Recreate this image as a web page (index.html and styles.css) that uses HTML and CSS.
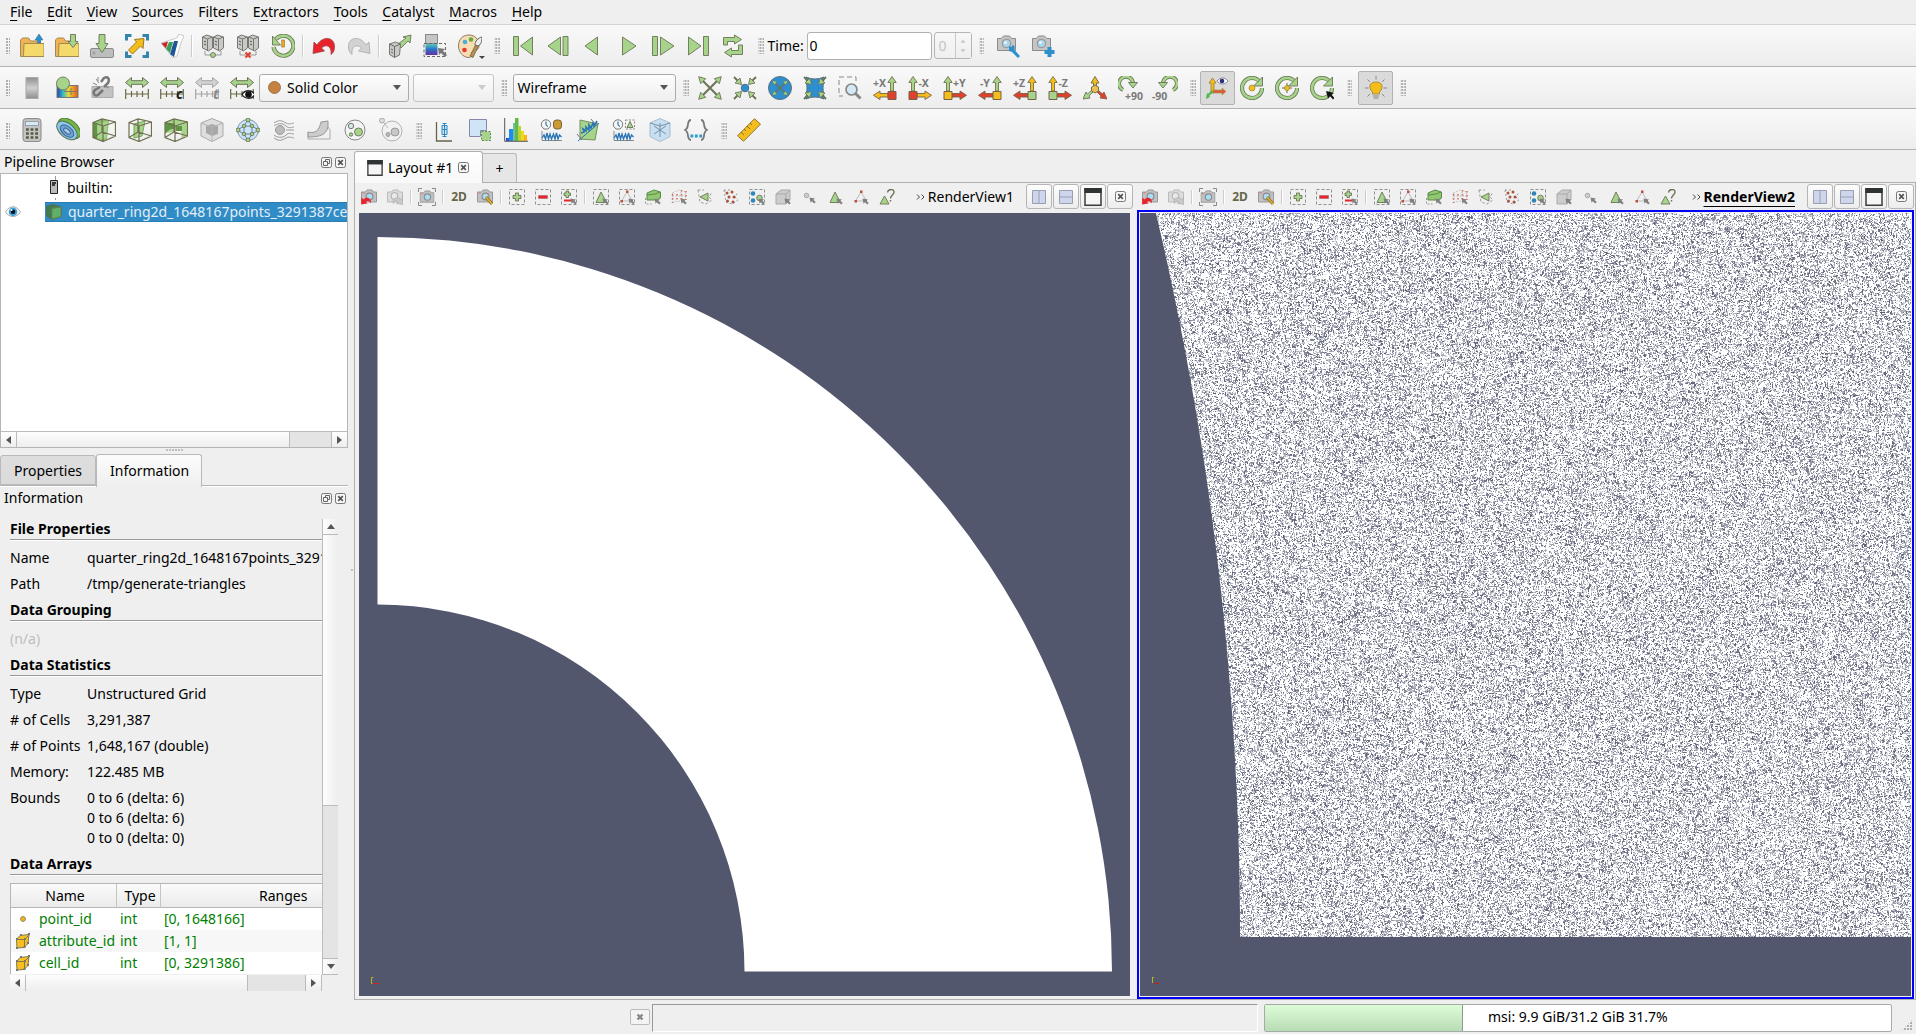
FILE: index.html
```html
<!DOCTYPE html>
<html lang="en">
<head>
<meta charset="utf-8">
<title>ParaView</title>
<link rel="stylesheet" href="styles.css">
</head>
<body>
<svg class="sprite" aria-hidden="true">
  <defs>
    <linearGradient id="gray" x1="0" x2="0" y1="0" y2="1"><stop offset="0" stop-color="#8f8f8f"/><stop offset=".5" stop-color="#cfcfcf"/><stop offset="1" stop-color="#8f8f8f"/></linearGradient>
    <linearGradient id="rainbow"><stop offset="0" stop-color="#1f3fae"/><stop offset=".3" stop-color="#38c0c8"/><stop offset=".55" stop-color="#e8d838"/><stop offset="1" stop-color="#e05a1c"/></linearGradient>
    <linearGradient id="cool" x1="0" x2="0" y1="0" y2="1"><stop offset="0" stop-color="#58c8b8"/><stop offset=".5" stop-color="#2a6fc8"/><stop offset="1" stop-color="#6a2fa0"/></linearGradient>
  </defs>
  <symbol id="folder" viewBox="0 0 24 24"><path d="M.5 22V6l2-2h6l2 3h10v4" fill="#f2b356" stroke="#a08a50"/><path d="M4 9.500h20v13H.5l3-1z" fill="#f4da6a" stroke="#a08a50"/></symbol>
  <symbol id="open" viewBox="0 0 24 24"><use href="#folder"/><path d="M19 0l4 6h-2.500v3h-3V6H15z" fill="#2d8fcb" stroke="#3a6f90" stroke-width=".5"/></symbol>
  <symbol id="load" viewBox="0 0 24 24"><use href="#folder"/><path d="M15.500.5h5v7H23l-5 6-5-6h2.500z" class="g"/></symbol>
  <symbol id="save" viewBox="0 0 24 24"><rect x=".5" y="14.500" width="23" height="9" rx="1.500" fill="#bcbebc" stroke="#8a8a8a"/><circle cx="4" cy="19" r="1" fill="#eee" stroke="#666" stroke-width=".6"/><path d="M9 .5h6v9h3l-6 9-6-9h3z" class="g"/></symbol>
  <symbol id="extract" viewBox="0 0 24 24"><path d="M1.500 6.500v-5h5M17.500 1.500h5v5M22.500 17.500v5h-5M6.500 22.500h-5v-5" fill="none" stroke="#3484b0" stroke-width="3"/><path d="M9.500 5.500L19 4.500l-1 10-2.500-2.500-8 8-4-4 8-8z" fill="#f4bd1c" stroke="#9a7b20"/></symbol>
  <symbol id="catalyst" viewBox="0 0 24 24"><path d="M1 9L17 4l2-4 5 2-2 4-5 16-4 2z" fill="#fff" stroke="#aaa" stroke-width=".6"/><path d="M1.500 9.500l4.500 5 2-7z" fill="#c8232c"/><path d="M9 8h4l-3 11-4-4z" fill="#3b9e56"/><path d="M14 7h4l-4 16-4-3z" fill="#1e5697"/></symbol>
  <symbol id="servers" viewBox="0 0 24 24"><path d="M1.500 3l4-2 6 2v11l-4 3-6-3z M12.500 3l4-2 6 2v11l-4 3-6-3z" fill="#c9c9c7" stroke="#77776f"/><path d="M1.500 3l5 2v12M6.500 5l5-2M12.500 3l5 2v12M17.500 5l5-2" fill="none" stroke="#77776f"/><path d="M3 7l2 1M14 7l2 1M3 10l2 1M14 10l2 1" stroke="#555"/><path d="M4 17v4h16v-4" fill="none" stroke="#999"/></symbol>
  <symbol id="connect" viewBox="0 0 24 24"><use href="#servers"/><circle cx="12" cy="21" r="2.500" class="g"/></symbol>
  <symbol id="disconnect" viewBox="0 0 24 24"><use href="#servers"/><path d="M9.500 18.500l5 5m0-5l-5 5" stroke="#e04434" stroke-width="2.200"/></symbol>
  <symbol id="history" viewBox="0 0 24 24"><path d="M5 5a10 10 0 1 1-2.500 8" fill="none" stroke="#6b7a58" stroke-width="4.200"/><path d="M5 5a10 10 0 1 1-2.500 8" fill="none" stroke="#a7d48b" stroke-width="2.500"/><path d="M1.500 2v9h8z" class="g"/><rect x="10.800" y="6" width="2.500" height="7" fill="#f4a91c" stroke="#876720" stroke-width=".6"/></symbol>
  <symbol id="undo" viewBox="0 0 24 24"><path d="M1 19.500L2 8l3 3C11 1 23 3 22.500 13c0 4-1.500 6-3.500 7.500C20 13 15 9 9.500 14l3 3z" fill="#e8232c" stroke="#a04548" stroke-width=".8"/></symbol>
  <symbol id="redo" viewBox="0 0 24 24"><path d="M23 19.500L22 8l-3 3C13 1 1 3 1.500 13c0 4 1.500 6 3.500 7.500C4 13 9 9 14.500 14l-3 3z" fill="#d2d2d2" stroke="#a8a8a8" stroke-width=".8"/></symbol>
  <symbol id="reader" viewBox="0 0 24 24"><path d="M10 10l8-6-3-1 8-2-1 8-2-2-7 7z" class="g"/><path d="M1.500 10l6-2 5 2-1 11-5 2.500-5-3z" fill="#c9c9c7" stroke="#77776f"/><path d="M1.500 10l5 2.500v11M6.500 12.500l6-2.500M3 15l2 1M3 18l2 1" fill="none" stroke="#66665f"/></symbol>
  <symbol id="resetses" viewBox="0 0 24 24"><rect x="2.500" y=".5" width="12" height="9" fill="#c4c5c4" stroke="#888"/><rect x="2.500" y="10" width="12" height="11" fill="url(#cool)"/><path d="M1 9.500h21.500v13H1z" fill="none" stroke="#666" stroke-dasharray="3 2"/><path d="M15 14l7 1-2 2 4 4-2 2-4-4-2 2z" fill="#777"/></symbol>
  <symbol id="palette" viewBox="0 0 24 24"><path d="M11 1C4 1 .5 6 .5 12S5 23.500 11 23.500c3 0 2-3 3-5s7-1 7-7S17 1 11 1z" fill="#f7dcb4" stroke="#8a7a60"/><circle cx="7" cy="8" r="2.300" fill="#49aedb"/><circle cx="13" cy="5.500" r="2.300" fill="#69a843"/><circle cx="6.500" cy="16" r="2.300" fill="#e23b2c"/><path d="M12 22l6-12 2.500 1.500-5.500 12z" fill="#b89455" stroke="#66552f" stroke-width=".7"/><path d="M17 11c0-4 3-7 7-8 0 4-1 8-4 9z" fill="#eee" stroke="#665"/></symbol>
  <symbol id="first" viewBox="0 0 24 24"><path d="M2.500 2.500h5v19h-5zM21.500 3v18L9.500 12z" class="g"/></symbol>
  <symbol id="prev" viewBox="0 0 24 24"><path d="M17 2.500h5v19h-5zM14.500 3v18L2 12z" class="g"/></symbol>
  <symbol id="back" viewBox="0 0 24 24"><path d="M16.500 3v18L4 12z" class="g"/></symbol>
  <symbol id="play" viewBox="0 0 24 24"><path d="M6.500 3v18L20 12z" class="g"/></symbol>
  <symbol id="next" viewBox="0 0 24 24"><path d="M1.500 2.500h5v19h-5zM9.500 3v18L23 12z" class="g"/></symbol>
  <symbol id="last" viewBox="0 0 24 24"><path d="M17.500 2.500h5v19h-5zM2.500 3v18L15 12z" class="g"/></symbol>
  <symbol id="loop" viewBox="0 0 24 24"><path d="M2.500 11V3.500h11V1l7 4.500-7 4.500V7.500H6.500V11zM21.500 11v9.500h-11V23l-7-4.500 7-4.500v2.500h7V11z" class="g"/></symbol>
  <symbol id="cam" viewBox="0 0 24 24"><path d="M1.500 4.500h4l2-2.500h6l2 2.500h4v12h-18z" fill="#c4c5c4" stroke="#8b8b8b"/><circle cx="10.500" cy="9.500" r="4.800" fill="#9a9a9a"/><circle cx="10.500" cy="9.500" r="3.500" fill="#a9d6ee"/><circle cx="9.500" cy="8.500" r="1.500" fill="#e8f6fc"/></symbol>
  <symbol id="camadj" viewBox="0 0 24 24"><use href="#cam"/><path d="M13 12l2.500 1 1-2 2 1v4l5.500 6-2 2-6-6-3-1z" fill="#2d8fcb"/></symbol>
  <symbol id="camadd" viewBox="0 0 24 24"><use href="#cam"/><path d="M18.500 13v10M13.500 18h10" stroke="#2d8fcb" stroke-width="4"/></symbol>
  <symbol id="bar" viewBox="0 0 24 24"><rect x="6" y="1.500" width="12" height="21" fill="url(#gray)" stroke="#aaa"/></symbol>
  <symbol id="editmap" viewBox="0 0 24 24"><rect x="2" y="9.500" width="21" height="12" fill="url(#rainbow)" stroke="#777"/><path d="M9 15.500h14M16 12v7" stroke="#876"/><circle cx="8" cy="7.500" r="6.500" class="g"/></symbol>
  <symbol id="unlink" viewBox="0 0 24 24"><path d="M2 10.500h21v11H2z" fill="#c2c2c2" stroke="#aaa"/><path d="M10 11l-5 3c-3 3 0 7 3 5l5-5M11 6l3-4c4-2 6 1 4 5l-4 4" fill="none" stroke="#777" stroke-width="2.500"/><path d="M6 3l3 4M3 7l4 2M8 1v4M19 12l-3-1" stroke="#888"/></symbol>
  <symbol id="range" viewBox="0 0 24 24"><path d="M.5 6.500l6-5v3.200h11V1.500l6 5-6 5V8.300h-11v3.200z" fill="var(--f,#a7d48b)" stroke="var(--s,#6b7355)"/><path d="M.7 13v10M23.300 13v10M1 18h22M6.500 15v6M12 15v6M17.500 15v6" stroke="var(--s,#6b6b45)" stroke-width="1.200"/></symbol>
  <symbol id="eye" viewBox="0 0 24 24"><path d="M12 18.500c3-5 10-5 13 0-3 5-10 5-13 0z" fill="#fff" stroke="#222" stroke-width="1.400"/><circle cx="18.500" cy="18.500" r="3.300" fill="#111"/></symbol>
  <symbol id="calc" viewBox="0 0 24 24"><rect x="3" y=".6" width="18" height="23" rx="3" fill="#c2c3c2" stroke="#888"/><rect x="5.500" y="3.500" width="13" height="4" fill="#d3ecfa" stroke="#888" stroke-width=".7"/><path d="M6 11.500h12.500M6 15.500h12.500M6 19.500h12.500" stroke="#59593f" stroke-width="2.600" stroke-dasharray="2.800 1.800"/></symbol>
  <symbol id="contour" viewBox="0 0 24 24"><g transform="rotate(40 12 12)"><ellipse cx="12" cy="10" rx="13" ry="8" fill="#71b844" stroke="#577b3c"/><ellipse cx="11.500" cy="13" rx="12" ry="7" fill="#8fc7e8" stroke="#54715a"/><ellipse cx="12" cy="13.500" rx="8" ry="4.500" fill="#6ea4d4" stroke="#3c6490"/><ellipse cx="12" cy="13.500" rx="4" ry="2" fill="#a9c9ea" stroke="#3c6490"/></g></symbol>
  <symbol id="cube" viewBox="0 0 24 24"><path d="M1 4.500L10 1l13.500 3v14L11 23.500 1 19.500zM1 4.500L11 8v15.500M11 8l12.500-4M10 1v13L1 19.500M10 14l13.500 4" fill="none" stroke="#6f6f50" stroke-width="1.200"/></symbol>
  <symbol id="clip" viewBox="0 0 24 24"><path d="M1 4.500L10 1l7 2-2 18-4 2.500-10-4z" fill="#8cc46c"/><path d="M5 6l11-3-2 17-8 1z" fill="#a7d48b"/><path d="M1 4.500l4 1.500v15l-4-1.500z" fill="#5f9445"/><use href="#cube"/></symbol>
  <symbol id="slice" viewBox="0 0 24 24"><path d="M6 6l11-3-3 15-8 2z" fill="#a7d48b" stroke="#79a85c"/><use href="#cube"/></symbol>
  <symbol id="thresh" viewBox="0 0 24 24"><path d="M1 4.500L10 1l13.500 3v13l-6 3V9l-6 1-1 4-9 1z" fill="#a7d48b"/><path d="M1 4.500l10 1v5l-5 1-5 4z" fill="#5f9445"/><path d="M12 8h6v5h-6z" fill="#5f9445"/><use href="#cube"/></symbol>
  <symbol id="subset" viewBox="0 0 24 24"><path d="M1 5l11-4.500L23 5v13l-11 5.500L1 18z" fill="#dedede" stroke="#a9a9a9"/><path d="M6 8l6-2 6 2v8l-6 2-6-3z" fill="#a8a8a8"/><path d="M1 5l11 4 11-4M12 9v14" stroke="#b5b5b5" fill="none"/></symbol>
  <symbol id="glyph" viewBox="0 0 24 24"><circle cx="12" cy="12" r="10.500" fill="#cfe4f4" stroke="#7f98ac"/><path d="M12 1.500L8 8l-6.500 4L8 16l4 6.500 4-6.500 6.500-4L16 8zM8 8h8v8H8z" fill="none" stroke="#5d86b0"/><g class="g"><circle cx="12" cy="2" r="2"/><circle cx="12" cy="22" r="2"/><circle cx="2" cy="12" r="2"/><circle cx="22" cy="12" r="2"/><circle cx="8" cy="8" r="1.800"/><circle cx="16" cy="8" r="1.800"/><circle cx="8" cy="16" r="1.800"/><circle cx="16" cy="16" r="1.800"/></g></symbol>
  <symbol id="stream" viewBox="0 0 24 24"><circle cx="8" cy="12" r="4.500" fill="#bbb" stroke="#999"/><path d="M2 5c6-4 8-2 12 0s6 0 8 0M2 8c2-2 8-4 12 0 3 3 6 1 8 1M14 12h8M2 17c2 2 8 4 12 0 3-3 6-1 8-1M2 20c6 4 8 2 12 0s6 0 8 0" fill="none" stroke="#999"/></symbol>
  <symbol id="warp" viewBox="0 0 24 24"><path d="M1 14c8 2 11-2 13-10l7-1v6c-2 8-8 10-20 10z" fill="#ccc" stroke="#999"/><path d="M1 14v7h22v-9l-2-3" fill="none" stroke="#aaa"/></symbol>
  <symbol id="group" viewBox="0 0 24 24"><circle cx="12" cy="12" r="10" fill="#f4f4f4" stroke="#888"/><circle cx="8" cy="8" r="2.700" fill="#cfe8e8" stroke="#777"/><circle cx="15.500" cy="14" r="4" class="g"/><circle cx="8" cy="16.500" r="1.700" class="g"/></symbol>
  <symbol id="block" viewBox="0 0 24 24"><circle cx="13" cy="13" r="10" fill="#f1f1f1" stroke="#b2b2b2"/><circle cx="3" cy="2.500" r="2.500" fill="#ddd" stroke="#aaa"/><circle cx="16" cy="14" r="4" fill="#c8c8c8" stroke="#999"/><circle cx="9" cy="16.500" r="2" fill="#bbb" stroke="#999"/><path d="M5 5l4 5" stroke="#bbb"/></symbol>
  <symbol id="boxplot" viewBox="0 0 24 24"><path d="M4.500 4v19H20" fill="none" stroke="#666650" stroke-width="1.300"/><path d="M12.500 5v14M10 7.500h5v4h-5zM10 11.500h5v5h-5zM10.500 5.500h4M10.500 18.500h4" fill="#cde5f7" stroke="#2b88c4"/></symbol>
  <symbol id="selplot" viewBox="0 0 24 24"><path d="M1.500 1.500h17v11h-6v6h-11z" fill="#cfe5f7" stroke="#88a"/><path d="M13.500 13.500h9v9h-9z" fill="#a7d48b" stroke="#638850" stroke-dasharray="2 1.500"/></symbol>
  <symbol id="histo" viewBox="0 0 24 24"><path d="M2 20h3v3H2z" fill="#2a56c8"/><path d="M5 11h4v12H5z" fill="#1d8df0"/><path d="M9 5h3v18H9z" fill="#70c0a8"/><path d="M11 0h3.500v23H11z" fill="#63b94a"/><path d="M14 8h3v15h-3z" fill="#b8d435"/><path d="M17 13h3v10h-3z" fill="#f2d422"/><path d="M20 17h3v6h-3z" fill="#fbb31b"/><path d="M.7 0v23.300H24" fill="none" stroke="#555"/></symbol>
  <symbol id="wave" viewBox="0 0 24 24"><path d="M2 13v9.500h20" fill="none" stroke="#888"/><path d="M2 20l2-3 1.500 4L7 15l1.500 6 1.500-5 1.500 5 2-5 1.500 5 1.500-6 1.500 6 1.500-4 2 2" fill="none" stroke="#2773b5" stroke-width="1.300"/></symbol>
  <symbol id="clock" viewBox="0 0 24 24"><circle cx="6" cy="6.500" r="4.700" fill="#eef6fb" stroke="#777"/><path d="M6 3.500V7l2 1.500" fill="none" stroke="#357"/></symbol>
  <symbol id="plottime" viewBox="0 0 24 24"><use href="#clock"/><use href="#wave"/><rect x="13.500" y="2" width="8" height="9" rx="3" fill="#cf9a33" stroke="#74643a"/></symbol>
  <symbol id="plotline" viewBox="0 0 24 24"><path d="M4 2l18 4-3 16-15-1z" fill="#a7d48b" stroke="#71915b"/><path d="M2 23L23 5" stroke="#2773b5"/><path d="M5 15l3-1-1-3 3 2 0-4 3 3v-5l2 3 2-5 1 3 3-5" fill="none" stroke="#2773b5" stroke-width="1.600"/><path d="M15 1l4 5M1 16l5 6" stroke="#777"/></symbol>
  <symbol id="plotsel" viewBox="0 0 24 24"><use href="#clock"/><use href="#wave"/><rect x="13.500" y="2" width="9" height="9" fill="none" stroke="#888" stroke-dasharray="2 1.500"/><path d="M15 9.500h6l-3-6z" class="g"/></symbol>
  <symbol id="probe" viewBox="0 0 24 24"><path d="M2 5l10-4.500L22 5v13.500l-10 5L2 18.500z" fill="#c9e0f2" stroke="#a6bccc"/><path d="M2 5l10 3 10-3M12 5v14M6 8l12 8M6 16l12-8" fill="none" stroke="#7790a4"/></symbol>
  <symbol id="braces" viewBox="0 0 24 24"><path d="M7 2C2 2 6 10 1 12c5 2 1 10 6 10M17 2c5 0 1 8 6 10-5 2-1 10-6 10" fill="none" stroke="#777" stroke-width="1.800"/><path d="M6.500 18h12" stroke="#2d9bc9" stroke-width="3" stroke-dasharray="2.800 1.600"/></symbol>
  <symbol id="ruler" viewBox="0 0 24 24"><path d="M17.500.7l6 5.500L6.500 23.300l-6-5.500z" fill="#f4bd1c" stroke="#8f7a38"/><path d="M4 14l3 3M7 11l2 2M10 8l3 3M13 5l2 2" stroke="#8f6f18"/></symbol>
  <symbol id="arrows4" viewBox="0 0 24 24"><path d="M4 4l16 16M20 4L4 20" stroke="#6b7355" stroke-width="2"/><path d="M.7.7l7 2-5 5zM23.300.7l-7 2 5 5zM.7 23.300l7-2-5-5zM23.300 23.300l-7-2 5-5z" class="g"/></symbol>
  <symbol id="arrowsin" viewBox="0 0 24 24"><path d="M1 1l5 5M23 1l-5 5M1 23l5-5M23 23l-5-5" stroke="#6b7355" stroke-width="1.800"/><path d="M8.500 8.500l-6.500-1.500 5-5zM15.500 8.500l6.500-1.500-5-5zM8.500 15.500L2 17l5 5zM15.500 15.500l6.500 1.500-5 5z" class="g"/></symbol>
  <symbol id="zoomctr" viewBox="0 0 24 24"><use href="#arrowsin"/><circle cx="12" cy="12" r="3.800" fill="#2d8fd0" stroke="#4e6f80"/></symbol>
  <symbol id="zoomdata" viewBox="0 0 24 24"><circle cx="12" cy="12" r="11.500" fill="#2d8fd0" stroke="#5c7480"/><use href="#arrows4" x="4" y="4" width="16" height="16"/></symbol>
  <symbol id="zoomclose" viewBox="0 0 24 24"><path d="M3 1q9 4 18 0-2 11 0 22-9-4-18 0Q5 12 3 1z" fill="#2d8fd0" stroke="#5c7480"/><use href="#arrowsin"/></symbol>
  <symbol id="zoombox" viewBox="0 0 24 24"><path d="M18 5V1H1v19h4" fill="none" stroke="#888" stroke-dasharray="5 3"/><path d="M17.500 17.500l5 5" stroke="#888" stroke-width="3"/><circle cx="13.500" cy="13.500" r="5.500" fill="#d4e9f6" stroke="#888" stroke-width="1.700"/></symbol>
  <symbol id="axL" viewBox="0 0 24 24"><path d="M3.500 15V6.500H.8L5 .5l4.200 6H6.500V15z" fill="var(--u)" stroke="#77704a" stroke-width=".9"/><path d="M9 17.500h8V15l6.500 4.300-6.500 4.200V21H9z" fill="var(--h)" stroke="#77604a" stroke-width=".9"/><path d="M1 15.500h8v8H1z" fill="var(--c)" stroke="#77604a"/></symbol>
  <symbol id="axR" viewBox="0 0 24 24"><use href="#axL" transform="matrix(-1 0 0 1 24 0)"/></symbol>
  <symbol id="iso" viewBox="0 0 24 24"><path d="M10.500 12V7H8l4-6.500L16 7h-2.500v5z" fill="#f4bd1c" stroke="#77704a"/><path d="M11 15l-5 5 1 2-7 1 3-7 1.500 2L10 13z" class="g"/><path d="M13 15l5 5-1 2 7 1-3-7-1.500 2L14 13z" fill="#e0402c" stroke="#77604a" stroke-width=".8"/><path d="M8.500 11l3.500-2 3.500 2v4L12 17l-3.500-2z" fill="#e7c050" stroke="#77704a"/></symbol>
  <symbol id="rot" viewBox="0 0 24 24"><path d="M5 14A7 7 0 1 1 15 7" fill="none" stroke="#6b7355" stroke-width="4"/><path d="M5 14A7 7 0 1 1 15 7" fill="none" stroke="#a7d48b" stroke-width="2.300"/><path d="M10.500 6.500h9L15 12z" class="g"/></symbol>
  <symbol id="axes" viewBox="0 0 24 24"><path d="M6 17V7H4l3.500-5L11 7H9v10z" fill="#f4bd1c" stroke="#8b6d30" stroke-width=".7"/><path d="M8 14h9v-2l4 3.500-4 3.500v-2H8z" fill="#e05a3c" stroke="#994" stroke-width=".6"/><path d="M8 16l-4 4 1 1-4 2 1-6 1 1 4-4z" fill="#4cb848"/><path d="M12 5c3-4 8-4 11 0-3 4-8 4-11 0z" fill="#fff" stroke="#888"/><circle cx="17" cy="5" r="2.300" fill="#2b2f86"/></symbol>
  <symbol id="ring" viewBox="0 0 24 24"><path d="M20 6a10 10 0 1 0 2 6" fill="none" stroke="#6b7a58" stroke-width="4.200"/><path d="M20 6a10 10 0 1 0 2 6" fill="none" stroke="#a7d48b" stroke-width="2.500"/><path d="M22.500 1v9h-9z" class="g"/></symbol>
  <symbol id="ctrdot" viewBox="0 0 24 24"><use href="#ring"/><circle cx="12" cy="12" r="3" fill="#f4bd1c" stroke="#8b7630" stroke-width=".6"/></symbol>
  <symbol id="ctrcross" viewBox="0 0 24 24"><use href="#ring"/><path d="M12 7v10M7 12h10" stroke="#665"/><circle cx="12" cy="12" r="2.500" fill="#f4bd1c" stroke="#8b7630" stroke-width=".6"/></symbol>
  <symbol id="ctrpick" viewBox="0 0 24 24"><use href="#ring"/><path d="M16 15l8 2-2.500 1.500 3 3.500-1.500 1.500-3-3.500-2 2.500z" fill="#111"/></symbol>
  <symbol id="bulb" viewBox="0 0 24 24"><path d="M12 6c-8 0-7 7-3.500 10v2h7v-2C19 13 20 6 12 6z" fill="#f4bd1c" stroke="#8b7630" stroke-width=".7"/><path d="M9 20h6M9.500 22h5M12 0v3.500M1 12h3.500M19.500 12H23M3.500 3.500L6 6M20.500 3.500L18 6M3.500 20.500L6 18M20.500 20.500L18 18" stroke="#888"/></symbol>

  <symbol id="pick" viewBox="0 0 16 16"><path d="M9.500 9.500l5.500 1-1.600 1.200 2.300 2.400-1.400 1.500-2.500-2.400-1.200 1.600z" fill="#808080"/></symbol>
  <symbol id="dash" viewBox="0 0 16 16"><path d="M.5.500h15v15H.5z" fill="none" stroke="#909090" stroke-dasharray="3 2"/></symbol>
  <symbol id="scam" viewBox="0 0 16 16"><path d="M.5 3h4l1.500-2h5l1.500 2H15.500v10h-15z" fill="#c0c1c0" stroke="#999"/><circle cx="8.500" cy="7.500" r="4" fill="#8c8c8c"/><circle cx="8.500" cy="7.500" r="2.800" fill="#a9dcf6"/><path d="M1.500 4h2" stroke="#d77"/></symbol>
  <symbol id="vundo" viewBox="0 0 16 16"><use href="#scam"/><path d="M0 15.500l.5-7 2 2c3-4 9-1 7 4-1-3-3-3-4.500-1.500l1.500 1.500z" fill="#e8232c"/></symbol>
  <symbol id="vredo" viewBox="0 0 16 16"><path d="M.5 3h4l1.500-2h5l1.500 2H15.500v10h-15z" fill="#dcdcdc" stroke="#bbb"/><circle cx="7.500" cy="7" r="3.500" fill="#e8e8e8" stroke="#aaa"/><path d="M16 15.500l-.5-7-2 2c-3-4-9-1-7 4 1-3 3-3 4.500-1.500L9.500 14.500z" fill="#c9c9c9" stroke="#aaa" stroke-width=".6"/></symbol>
  <symbol id="vcap" viewBox="0 0 18 18"><path d="M.5 4V.5H4M14 .5h3.500V4M17.500 14v3.500H14M4 17.500H.5V14" fill="none" stroke="#888"/><use href="#scam" x="1.500" y="2" width="15" height="15"/></symbol>
  <symbol id="vzoom" viewBox="0 0 16 16"><use href="#scam"/><path d="M9 8l6 7" stroke="#8a7020" stroke-width="3"/><path d="M9 8l6 7" stroke="#e0b530" stroke-width="1.500"/></symbol>
  <symbol id="vadd" viewBox="0 0 16 16"><use href="#dash"/><path d="M6.500 4h3v2.500H12v3H9.500V12h-3V9.500H4v-3h2.500z" class="g"/></symbol>
  <symbol id="vsub" viewBox="0 0 16 16"><use href="#dash"/><path d="M3.500 6.500h9v3h-9z" fill="#e8232c" stroke="#a66" stroke-width=".6"/></symbol>
  <symbol id="vtog" viewBox="0 0 16 16"><use href="#dash"/><path d="M5 2h2.500v2h2v2.500h-2v2H5v-2H3V4h2z" class="g"/><path d="M3 10.500h7v2H3z" fill="#e8232c"/><use href="#pick"/></symbol>
  <symbol id="tri" viewBox="0 0 16 16"><path d="M3 13.500h10.500L8 3z" class="g"/><use href="#pick"/></symbol>
  <symbol id="vcell" viewBox="0 0 16 16"><use href="#dash"/><use href="#tri"/></symbol>
  <symbol id="pts" viewBox="0 0 16 16"><path d="M2.500 12h11L8 3z" fill="none" stroke="#bbb"/><path d="M7 1.500h2.500v2.500H7zM1.500 11h2.500v2.500H1.500zM12 11h2v2h-2z" fill="#b8503c"/><use href="#pick"/></symbol>
  <symbol id="vpt" viewBox="0 0 16 16"><use href="#dash"/><use href="#pts"/></symbol>
  <symbol id="vfc" viewBox="0 0 16 16"><path d="M2 4l7-3 6.500 2v6l-4 2H2z" fill="#8fc870" stroke="#5d8a48"/><path d="M2 6l8-1 5-2" fill="none" stroke="#5d8a48"/><path d="M.5 9v6h6" fill="none" stroke="#999" stroke-dasharray="2 1.500"/><use href="#pick"/></symbol>
  <symbol id="vfp" viewBox="0 0 16 16"><path d="M1.500 4L8 1l6.500 2v7L10 12l-8 1zM1.500 7h13M10 3v9" fill="none" stroke="#bbb" stroke-dasharray="1.500 1.500"/><path d="M1.500 5v9M6 5v8M10.500 1v9M15 2v9" stroke="#d66a5c" stroke-width="1.500" stroke-dasharray="1.500 2.500"/><use href="#pick"/></symbol>
  <symbol id="vpc" viewBox="0 0 16 16"><path d="M1 1l2 12 6 2 6-4-3-3 3-5M1 1h6" fill="none" stroke="#999" stroke-dasharray="2.500 2"/><path d="M3 8l8-4v8z" class="g"/></symbol>
  <symbol id="vpp" viewBox="0 0 16 16"><path d="M1 1l2 12 6 2 6-4-3-3 3-5M1 1h6" fill="none" stroke="#999" stroke-dasharray="2 2"/><g fill="#a8543f"><circle cx="4" cy="4" r="1.500"/><circle cx="9" cy="3" r="1.500"/><circle cx="6" cy="8" r="1.500"/><circle cx="11" cy="8" r="1.500"/><circle cx="4.500" cy="12" r="1.500"/><circle cx="10" cy="13" r="1.500"/></g></symbol>
  <symbol id="vblk" viewBox="0 0 16 16"><use href="#dash"/><circle cx="4" cy="4.500" r="2.300" fill="#2e86b8"/><circle cx="4" cy="11.500" r="2.300" fill="#2e86b8"/><circle cx="10.500" cy="9" r="2.800" class="g"/><use href="#pick"/></symbol>
  <symbol id="vcube" viewBox="0 0 16 16"><path d="M1 5l5-4h9v10l-4 4H1zM1 5h10v10M11 5l4-4" fill="#ccc" stroke="#aaa"/><use href="#pick"/></symbol>
  <symbol id="vhov" viewBox="0 0 16 16"><circle cx="5.500" cy="6.500" r="2.300" fill="#ccc" stroke="#aaa"/><use href="#pick" x="-1" y="-1"/></symbol>
  <symbol id="vq" viewBox="0 0 16 16"><path d="M1 15h9L5.500 7z" class="g"/><path d="M8.500 3.500C9-.5 15-.5 15 3c0 3-3.500 3-3.500 6.500M11.500 11v1.500" fill="none" stroke="#6b7355" stroke-width="1.400"/></symbol>
  <symbol id="splith" viewBox="0 0 14 14"><path d="M.5.500h13v13H.5zM7 .5v13" fill="#d0d5ee" stroke="#98a0b0"/></symbol>
  <symbol id="splitv" viewBox="0 0 14 14"><path d="M.5.500h13v13H.5zM.5 7h13" fill="#d0d5ee" stroke="#98a0b0"/></symbol>
  <symbol id="win" viewBox="0 0 18 18"><path d="M1 .8h16v16.400H1z" fill="#f5f5f5" stroke="#3a3c3d" stroke-width="1.500"/><path d="M.3 0h17.400v5H.3z" fill="#303334"/></symbol>
  <symbol id="close" viewBox="0 0 11 11"><rect x=".5" y=".5" width="10" height="10" rx="1.800" fill="#f6f6f6" stroke="#777"/><path d="M3.200 3.200l4.600 4.600m0-4.600L3.200 7.800" stroke="#555" stroke-width="1.700"/></symbol>
  <symbol id="float" viewBox="0 0 11 11"><rect x=".5" y=".5" width="10" height="10" rx="1.800" fill="#f6f6f6" stroke="#777"/><path d="M4.500 4V2.500h4v4H7M2.500 4.500h4v4h-4z" fill="none" stroke="#666"/></symbol>
  <symbol id="cell" viewBox="0 0 16 16"><path d="M1.500 6.500L5 2.500l9-1-1 9-4 4-7 .5z" fill="#f7bf20" stroke="#807850"/><path d="M1.500 6.500H9.500v8M9.500 6.500l5-5" fill="none" stroke="#807850"/><path d="M1 6h2M5 2h2M13 1h2M12 10h2M1 15h2M8.500 14h2M9 6h2" stroke="#777" stroke-width="2"/></symbol>
</svg>

<nav class="menubar">
  <span><u>F</u>ile</span><span><u>E</u>dit</span><span><u>V</u>iew</span><span><u>S</u>ources</span><span>Fi<u>l</u>ters</span><span>E<u>x</u>tractors</span><span><u>T</u>ools</span><span><u>C</u>atalyst</span><span><u>M</u>acros</span><span><u>H</u>elp</span>
</nav>

<div class="toolbar">
  <i class="handle start"></i>
  <b class="tb"><svg><use href="#open"/></svg></b><b class="tb"><svg><use href="#load"/></svg></b><b class="tb"><svg><use href="#save"/></svg></b><b class="tb"><svg><use href="#extract"/></svg></b><b class="tb"><svg><use href="#catalyst"/></svg></b>
  <i class="sep"></i>
  <b class="tb"><svg><use href="#connect"/></svg></b><b class="tb"><svg><use href="#disconnect"/></svg></b><b class="tb"><svg><use href="#history"/></svg></b>
  <i class="sep"></i>
  <b class="tb"><svg><use href="#undo"/></svg></b><b class="tb"><svg><use href="#redo"/></svg></b>
  <i class="sep"></i>
  <b class="tb"><svg><use href="#reader"/></svg></b><b class="tb"><svg><use href="#resetses"/></svg></b><b class="tb drop"><svg><use href="#palette"/></svg></b>
  <i class="handle"></i>
  <b class="tb"><svg><use href="#first"/></svg></b><b class="tb"><svg><use href="#prev"/></svg></b><b class="tb"><svg><use href="#back"/></svg></b><b class="tb"><svg><use href="#play"/></svg></b><b class="tb"><svg><use href="#next"/></svg></b><b class="tb"><svg><use href="#last"/></svg></b><b class="tb"><svg><use href="#loop"/></svg></b>
  <i class="handle narrow"></i>
  <label class="time">Time:</label><span class="field">0</span><span class="spin"><em>0</em><s></s></span>
  <i class="handle"></i>
  <b class="tb"><svg><use href="#camadj"/></svg></b><b class="tb"><svg><use href="#camadd"/></svg></b>
</div>

<div class="toolbar">
  <i class="handle start"></i>
  <b class="tb"><svg><use href="#bar"/></svg></b><b class="tb"><svg><use href="#editmap"/></svg></b><b class="tb"><svg><use href="#unlink"/></svg></b><b class="tb"><svg><use href="#range"/></svg></b><b class="tb"><svg viewBox="0 0 24 24"><use href="#range"/><text class="letter" x="16" y="23">c</text></svg></b><b class="tb off"><svg viewBox="0 0 24 24"><use href="#range"/><text class="letter" x="18" y="23">t</text></svg></b><b class="tb"><svg viewBox="0 0 24 24"><use href="#range"/><use href="#eye"/></svg></b>
  <span class="combo color"><i class="dot"></i>Solid Color</span>
  <span class="combo empty"></span>
  <i class="handle"></i>
  <span class="combo repr">Wireframe</span>
  <i class="handle narrow"></i>
  <b class="tb"><svg><use href="#arrows4"/></svg></b><b class="tb"><svg><use href="#zoomctr"/></svg></b><b class="tb"><svg><use href="#zoomdata"/></svg></b><b class="tb"><svg><use href="#zoomclose"/></svg></b><b class="tb"><svg><use href="#zoombox"/></svg></b>
  <b class="tb ax x"><svg viewBox="0 0 24 24"><use href="#axR"/><text x="0" y="11">+X</text></svg></b><b class="tb ax x"><svg viewBox="0 0 24 24"><use href="#axL"/><text x="10.500" y="11">-X</text></svg></b><b class="tb ax y"><svg viewBox="0 0 24 24"><use href="#axL"/><text x="10" y="11">+Y</text></svg></b><b class="tb ax y"><svg viewBox="0 0 24 24"><use href="#axR"/><text x="2" y="11">-Y</text></svg></b><b class="tb ax z"><svg viewBox="0 0 24 24"><use href="#axR"/><text x="0" y="11">+Z</text></svg></b><b class="tb ax z"><svg viewBox="0 0 24 24"><use href="#axL"/><text x="10.500" y="11">-Z</text></svg></b>
  <b class="tb"><svg><use href="#iso"/></svg></b>
  <b class="tb ax"><svg viewBox="0 0 24 24"><use href="#rot"/><text x="7" y="24">+90</text></svg></b><b class="tb ax"><svg viewBox="0 0 24 24"><use href="#rot" transform="matrix(-1 0 0 1 25 0)"/><text x="-1" y="24">-90</text></svg></b>
  <i class="handle narrow"></i>
  <b class="tb on"><svg><use href="#axes"/></svg></b><b class="tb"><svg><use href="#ctrdot"/></svg></b><b class="tb"><svg><use href="#ctrcross"/></svg></b><b class="tb"><svg><use href="#ctrpick"/></svg></b>
  <i class="handle"></i>
  <b class="tb on"><svg><use href="#bulb"/></svg></b>
  <i class="handle"></i>
</div>

<div class="toolbar wide">
  <i class="handle start"></i>
  <b class="tb"><svg><use href="#calc"/></svg></b><b class="tb"><svg><use href="#contour"/></svg></b><b class="tb"><svg><use href="#clip"/></svg></b><b class="tb"><svg><use href="#slice"/></svg></b><b class="tb"><svg><use href="#thresh"/></svg></b><b class="tb"><svg><use href="#subset"/></svg></b><b class="tb"><svg><use href="#glyph"/></svg></b><b class="tb"><svg><use href="#stream"/></svg></b><b class="tb"><svg><use href="#warp"/></svg></b><b class="tb"><svg><use href="#group"/></svg></b><b class="tb"><svg><use href="#block"/></svg></b>
  <i class="handle narrow"></i>
  <b class="tb"><svg><use href="#boxplot"/></svg></b><b class="tb"><svg><use href="#selplot"/></svg></b><b class="tb"><svg><use href="#histo"/></svg></b><b class="tb"><svg><use href="#plottime"/></svg></b><b class="tb"><svg><use href="#plotline"/></svg></b><b class="tb"><svg><use href="#plotsel"/></svg></b><b class="tb"><svg><use href="#probe"/></svg></b><b class="tb"><svg><use href="#braces"/></svg></b>
  <i class="handle narrow"></i>
  <b class="tb"><svg><use href="#ruler"/></svg></b>
</div>

<main class="main">
  <aside class="side">
    <header class="dock"><span>Pipeline Browser</span><svg><use href="#float"/></svg><svg><use href="#close"/></svg></header>
    <section class="tree">
      <div class="node"><span class="vis"></span><svg class="srv" viewBox="0 0 8 14"><path d="M5.500-6v6M5.500 18v4" stroke="#999"/><path d="M.5.500h7v13h-7z" fill="#bbb" stroke="#222"/><path d="M2 3h4M2 5h3" stroke="#111" stroke-width="1.300"/></svg><span>builtin:</span></div>
      <div class="node"><span class="vis"><svg viewBox="0 0 16 12"><path d="M.5 6c4-7 11-7 15 0-4 6-11 6-15 0z" fill="#fff" stroke="#aaa"/><circle cx="8" cy="5.800" r="4.300" fill="#3f9fd6"/><circle cx="8" cy="5.800" r="2.300" fill="#031421"/><circle cx="6.500" cy="4" r="1" fill="#fff"/></svg></span><span class="picked"><svg viewBox="0 0 16 16"><path d="M.5 2L7 .5 15.500 3v9.500L6 15.500.5 12z" fill="#3f7d4e" stroke="#4d6f66"/><path d="M6 4.500l9-1.500v9.500L6 15z" fill="#60b068" stroke="#64825e"/></svg>quarter_ring2d_1648167points_3291387cells</span></div>
      <div class="hbar"><i class="l"></i><i class="thumb"></i><i class="r"></i></div>
    </section>
    <div class="grip"></div>
    <div class="tabs"><span>Properties</span><span class="cur">Information</span></div>
    <header class="dock info-title"><span>Information</span><svg><use href="#float"/></svg><svg><use href="#close"/></svg></header>
    <div class="info">
      <div class="scroll">
        <h3>File Properties</h3>
        <dl><dt>Name</dt><dd>quarter_ring2d_1648167points_3291387cells</dd><dt>Path</dt><dd>/tmp/generate-triangles</dd></dl>
        <h3>Data Grouping</h3>
        <p class="na">(n/a)</p>
        <h3>Data Statistics</h3>
        <dl><dt>Type</dt><dd>Unstructured Grid</dd><dt># of Cells</dt><dd>3,291,387</dd><dt># of Points</dt><dd>1,648,167 (double)</dd><dt>Memory:</dt><dd>122.485 MB</dd><dt>Bounds</dt><dd>0 to 6 (delta: 6)<br>0 to 6 (delta: 6)<br>0 to 0 (delta: 0)</dd></dl>
        <h3>Data Arrays</h3>
        <div class="arrays">
          <div class="row head"><span>Name</span><span>Type</span><span>Ranges</span></div>
          <div class="row"><span><svg viewBox="0 0 16 16"><circle cx="8" cy="8" r="2.400" fill="#f4b51c" stroke="#93874d"/></svg>point_id</span><span>int</span><span>[0, 1648166]</span></div>
          <div class="row alt"><span><svg><use href="#cell"/></svg>attribute_id</span><span>int</span><span>[1, 1]</span></div>
          <div class="row"><span><svg><use href="#cell"/></svg>cell_id</span><span>int</span><span>[0, 3291386]</span></div>
        </div>
      </div>
      <div class="vbar"><i class="u"></i><i class="thumb"></i><i class="d"></i></div>
      <div class="hbar"><i class="l"></i><i class="thumb"></i><i class="r"></i></div>
    </div>
  </aside>
  <div class="splitter"></div>

  <section class="work">
    <div class="ltabs"><span class="cur"><svg class="w"><use href="#win"/></svg>Layout #1<svg class="x"><use href="#close"/></svg></span><span class="plus">+</span></div>
    <div class="views">
      <article class="view">
        <div class="vtools">
          <b><svg><use href="#vundo"/></svg></b><b><svg><use href="#vredo"/></svg></b><i></i><b><svg class="big"><use href="#vcap"/></svg></b><i></i><b class="two">2D</b><b><svg><use href="#vzoom"/></svg></b><i></i><b><svg><use href="#vadd"/></svg></b><b><svg><use href="#vsub"/></svg></b><b><svg><use href="#vtog"/></svg></b><i></i><b><svg><use href="#vcell"/></svg></b><b><svg><use href="#vpt"/></svg></b><b><svg><use href="#vfc"/></svg></b><b><svg><use href="#vfp"/></svg></b><b><svg><use href="#vpc"/></svg></b><b><svg><use href="#vpp"/></svg></b><b><svg><use href="#vblk"/></svg></b><b><svg><use href="#vcube"/></svg></b><b><svg><use href="#vhov"/></svg></b><b><svg><use href="#tri"/></svg></b><b><svg><use href="#pts"/></svg></b><b><svg><use href="#vq"/></svg></b>
          <span class="title"><svg class="more" viewBox="0 0 9 6"><path d="M1 .5l2.500 2.500L1 5.500M5.500.5L8 3 5.500 5.500" fill="none" stroke="#444"/></svg>RenderView1</span>
          <span class="btn"><svg><use href="#splith"/></svg></span><span class="btn"><svg><use href="#splitv"/></svg></span><span class="btn"><svg class="big"><use href="#win"/></svg></span><span class="btn"><svg class="sm"><use href="#close"/></svg></span>
        </div>
        <svg class="render" viewBox="359 213 771 783">
          <path d="M377.500 237A734.500 734.500 0 0 1 1112 971.500H744.500A367.500 367.500 0 0 0 377.500 604.500z" fill="#fff"/>
          <path d="M373.500 977.500h-2v6h1" fill="none" stroke="#b5b52a"/><path d="M373 983.500h6" stroke="#c22"/>
        </svg>
      </article>
      <article class="view active">
        <div class="vtools">
          <b><svg><use href="#vundo"/></svg></b><b><svg><use href="#vredo"/></svg></b><i></i><b><svg class="big"><use href="#vcap"/></svg></b><i></i><b class="two">2D</b><b><svg><use href="#vzoom"/></svg></b><i></i><b><svg><use href="#vadd"/></svg></b><b><svg><use href="#vsub"/></svg></b><b><svg><use href="#vtog"/></svg></b><i></i><b><svg><use href="#vcell"/></svg></b><b><svg><use href="#vpt"/></svg></b><b><svg><use href="#vfc"/></svg></b><b><svg><use href="#vfp"/></svg></b><b><svg><use href="#vpc"/></svg></b><b><svg><use href="#vpp"/></svg></b><b><svg><use href="#vblk"/></svg></b><b><svg><use href="#vcube"/></svg></b><b><svg><use href="#vhov"/></svg></b><b><svg><use href="#tri"/></svg></b><b><svg><use href="#pts"/></svg></b><b><svg><use href="#vq"/></svg></b>
          <span class="title"><svg class="more" viewBox="0 0 9 6"><path d="M1 .5l2.500 2.500L1 5.500M5.500.5L8 3 5.500 5.500" fill="none" stroke="#444"/></svg><strong>RenderView2</strong></span>
          <span class="btn"><svg><use href="#splith"/></svg></span><span class="btn"><svg><use href="#splitv"/></svg></span><span class="btn"><svg class="big"><use href="#win"/></svg></span><span class="btn"><svg class="sm"><use href="#close"/></svg></span>
        </div>
        <canvas class="render" id="mesh" width="771" height="783"></canvas>
      </article>
    </div>
  </section>
</main>

<footer class="status">
  <span class="cancel"><svg viewBox="0 0 8 8"><path d="M1.500 1.500l5 5m0-5l-5 5" stroke="#888" stroke-width="2.400"/></svg></span>
  <span class="message"></span>
  <span class="memory"><i></i><span>msi: 9.9 GiB/31.2 GiB 31.7%</span></span>
  <span class="size"></span>
</footer>
<script src="mesh.js"></script>
</body>
</html>
```
FILE: styles.css
```css
* { box-sizing: border-box; }
body { margin: 0; width: 1916px; height: 1034px; overflow: hidden; background: #efefef; color: #000; font: 14px/20px "Noto Sans", sans-serif; display: flex; flex-direction: column; }
i, b, s, em { font-style: normal; font-weight: normal; text-decoration: none; }
svg { display: block; overflow: visible; flex: none; }
.sprite { width: 0; height: 0; position: absolute; }
.g { fill: #a7d48b; stroke: #6b7355; stroke-width: .9; }

.menubar { height: 25px; border-bottom: 1px solid #d2d2d2; display: flex; align-items: center; gap: 14.600px; padding: 0 0 1px 10px; flex: none; }
.menubar u { text-decoration-thickness: 1px; text-underline-offset: 3px; }

.toolbar { height: 42px; flex: none; display: flex; align-items: center; background: linear-gradient(#f9f9f9, #ededed); border-bottom: 1px solid #b2b2b2; }
.toolbar.wide { height: 41px; padding-top: 2px; }
.tb { width: 35px; height: 34px; flex: none; display: flex; align-items: center; justify-content: center; position: relative; }
.wide .tb { width: 35.950px; }
.tb svg { width: 24px; height: 24px; }
.tb.on { background: #dadada; border: 1px solid #b2b2b2; border-radius: 2px; }
.tb.drop::after { content: ""; position: absolute; right: 2px; bottom: 4px; border: 3px solid transparent; border-top-color: #444; border-bottom: 0; }
.tb.off { --f: #d2d2d2; --s: #a5a5a5; }
.letter { font: italic bold 14px "Noto Sans", sans-serif; fill: #222; }
.off .letter { fill: #888; }
.ax text { font: bold 10.500px "Noto Sans", sans-serif; fill: #7a7a7a; }
.x { --u: #a7d48b; --h: #f4bd1c; --c: #e0402c; }
.y { --u: #a7d48b; --h: #e0402c; --c: #f4bd1c; }
.z { --u: #f4bd1c; --h: #e0402c; --c: #a7d48b; }
.handle { width: 18.500px; height: 17px; flex: none; background: radial-gradient(circle at 1px 1px, #aaa .7px, transparent .8px) center / 3px 3px content-box; padding: 0 6px 0 7px; }
.handle.start { width: 14px; padding: 0 4px 0 5px; }
.handle.narrow { width: 17px; padding: 0 4px 0 7px; }
.sep { width: 6px; height: 22px; flex: none; background: linear-gradient(#ccc, #ccc) 2px 0 / 1px 100% no-repeat, linear-gradient(#fff, #fff) 3px 0 / 1px 100% no-repeat; }
.time { width: 39px; }
.field { width: 125px; height: 28px; border: 1px solid #b0b0b0; border-radius: 3px; background: #fff; padding: 3px 2px; }
.spin { width: 38px; height: 27px; margin-left: 2px; border: 1px solid #b5b5b5; border-radius: 3px; color: #c4c4c4; display: flex; }
.spin em { width: 21px; padding: 3px 4px; border-right: 1px solid #c8c8c8; }
.spin s { flex: 1; background: conic-gradient(from 145deg at 50% 0, #d0d0d0 70deg, transparent 0) center 6px / 8px 4px no-repeat, conic-gradient(from -35deg at 50% 100%, #d0d0d0 70deg, transparent 0) center 16px / 8px 4px no-repeat, linear-gradient(#f8f8f8, #eee); }
.combo { height: 28px; border: 1px solid #ababab; border-radius: 3px; background: linear-gradient(#fdfdfd, #eeeeee); display: flex; align-items: center; padding-left: 4px; flex: none; }
.combo::after { content: ""; margin-left: auto; margin-right: 7px; border: 5px solid transparent; border-top-color: #555; border-bottom: 0; border-left-width: 4.500px; border-right-width: 4.500px; }
.color { width: 150px; padding-left: 8px; }
.empty { width: 81px; margin-left: 4px; border-color: #c4c4c4; }
.empty::after { border-top-color: #ccc; }
.repr { width: 163px; }
.dot { width: 13px; height: 13px; border-radius: 50%; background: #c78241; border: 1px solid #9a7650; margin-right: 6px; }

.main { flex: 1; display: flex; min-height: 0; }
.side { width: 348px; flex: none; }
.dock { height: 23px; padding: 1px 2px 0 4px; display: flex; align-items: center; gap: 3px; }
.dock span { margin-right: auto; }
.dock svg { width: 11px; height: 11px; }
.tree { height: 275px; background: #fff; border: 1px solid #b5b5b5; display: flex; flex-direction: column; padding-top: 2px; }
.node { height: 24px; display: flex; align-items: center; white-space: nowrap; overflow: hidden; flex: none; }
.node > span { line-height: 20px; }
.vis { width: 44px; padding-left: 4px; }
.vis svg { width: 16px; height: 12px; }
.srv { width: 8px; height: 14px; margin: -2px 9px 0 5px; }
.picked { height: 20px; background: #308cc6; box-shadow: inset 0 1px #2a7db2, inset 0 -1px #2a7db2; color: #e4eef6; display: flex; flex: 1; min-width: 0; }
.picked svg { width: 16px; height: 16px; margin: 2px 6px 0 1px; }
.hbar { height: 16px; display: flex; background: #e4e4e4; margin-top: auto; border-top: 1px solid #bbb; flex: none; }
.hbar .l, .hbar .r { width: 16px; background: linear-gradient(#fff, #eee); display: grid; place-items: center; }
.hbar .l, .hbar .thumb { border-right: 1px solid #bbb; }
.hbar .r { border-left: 1px solid #bbb; margin-left: auto; }
.hbar .l::after, .hbar .r::after { content: ""; border: 4.500px solid transparent; border-right: 5px solid #555; border-left: 0; }
.hbar .r::after { border-left: 5px solid #555; border-right: 0; }
.hbar .thumb { width: 273px; background: linear-gradient(#fdfdfd, #eee); }
.grip { width: 17px; height: 6px; margin: 0 auto; background: radial-gradient(circle at 1px 1px, #bbb .7px, transparent .8px) 0 1px / 3px 3px repeat-x; }
.tabs { height: 32px; display: flex; align-items: flex-end; border-bottom: 1px solid #b5b5b5; box-shadow: 0 1px #fff; }
.tabs span { width: 96px; height: 30px; padding: 5px 0 0 13px; border: 1px solid #b9b9b9; border-radius: 3px 3px 0 0; background: linear-gradient(#dedede, #dadada); }
.tabs .cur { width: 106px; height: 33px; margin-bottom: -2px; padding-top: 6px; background: linear-gradient(#fcfcfc, #efefef); border-bottom: 0; }
.info { padding-left: 10px; margin-top: 10px; display: grid; grid-template: 456px 16px / 312px 16px; }
.vbar { border-left: 1px solid #bbb; border-bottom: 1px solid #bbb; background: #e4e4e4; display: flex; flex-direction: column; }
.vbar .u, .vbar .d { height: 16px; background: linear-gradient(90deg, #fdfdfd, #eee); display: grid; place-items: center; }
.vbar .u, .vbar .thumb { border-bottom: 1px solid #bbb; }
.vbar .d { margin-top: auto; border-top: 1px solid #bbb; }
.vbar .u::after { content: ""; border: 4.500px solid transparent; border-bottom: 5px solid #555; border-top: 0; }
.vbar .d::after { content: ""; border: 4.500px solid transparent; border-top: 5px solid #555; border-bottom: 0; }
.vbar .thumb { height: 271px; background: linear-gradient(90deg, #fdfdfd, #eee); }
.info .hbar { border-right: 1px solid #bbb; border-top: 0; margin: 0; }
.info .hbar .thumb { width: 222px; }
.info h3 { font-size: 14px; line-height: 20px; height: 21px; margin: 0; border-bottom: 1px solid #999; box-shadow: 0 1px #fff; }
.scroll { overflow: hidden; display: flex; flex-direction: column; }
.scroll dl { margin: 8px 0 6px; display: grid; grid-template-columns: 77px 300px; row-gap: 6px; }
.scroll dd { margin: 0; }
.scroll dt { white-space: nowrap; }
.na { margin: 8px 0 6px; color: #bebebe; }
.arrays { width: 700px; margin-top: 8px; border: 1px solid #b5b5b5; border-bottom: 0; background: #fff; color: #008000; }
.row { display: grid; grid-template-columns: 106px 44px 508px; height: 22px; line-height: 22px; }
.row span { display: flex; padding-left: 3px; white-space: nowrap; }
.row svg { width: 16px; height: 16px; margin: 3px 8px 0 1px; }
.alt { background: #f7f7f7; }
.head { height: 24px; line-height: 24px; color: #000; background: linear-gradient(#fbfbfb, #ebebeb); border-bottom: 1px solid #b5b5b5; }
.head span { justify-content: center; border-right: 1px solid #c4c4c4; }
.head span:last-child { justify-content: flex-start; padding-left: 98px; }
.splitter { width: 6px; flex: none; background: radial-gradient(circle at 1px 1px, #bbb .7px, transparent .8px) 3px 419px / 3px 3px no-repeat; }

.work { flex: 1; min-width: 0; display: flex; flex-direction: column; }
.ltabs { height: 33px; display: flex; align-items: flex-end; border-bottom: 1px solid #b0b0b0; flex: none; }
.ltabs .cur { width: 129px; height: 32px; margin-bottom: -1px; border: 1px solid #b0b0b0; border-bottom: 0; border-radius: 3px 3px 0 0; background: linear-gradient(#fff, #f8f8f8); display: flex; align-items: center; padding-left: 12px; gap: 5px; white-space: nowrap; }
.ltabs .w { width: 16px; height: 16px; }
.ltabs .x { width: 11px; height: 11px; }
.plus { width: 34px; height: 29px; border: 1px solid #b9b9b9; border-left: 0; border-bottom: 0; border-radius: 0 3px 0 0; background: #e6e6e6; text-align: center; line-height: 29px; }
.views { flex: 1; border: 1px solid #b0b0b0; border-top: 0; display: flex; gap: 3px; padding-top: 1px; min-height: 0; background: #f0f0f0; }
.view { width: 778px; flex: none; }
.vtools { height: 25px; padding-left: 1px; display: flex; align-items: center; }
.vtools b { width: 26px; flex: none; display: grid; place-items: center; }
.vtools b svg { width: 16px; height: 16px; }
.vtools b .big { width: 18px; height: 18px; }
.vtools > i { width: 6px; height: 14px; flex: none; background: linear-gradient(90deg, #ccc 50%, #fff 50%) 2px 0 / 2px 100% no-repeat; }
.vtools .two { font: bold 12px/16px "Noto Sans", sans-serif; color: #66664a; }
.title { margin-left: auto; margin-right: 12px; display: flex; align-items: center; white-space: nowrap; }
.title strong { text-decoration: underline; text-decoration-thickness: 1px; text-underline-offset: 4px; }
.more { width: 9px; height: 6px; margin-right: 3px; }
.btn { width: 26px; height: 25px; margin-right: 1px; flex: none; border: 1px solid #b5b5b5; border-radius: 3px; background: linear-gradient(#fdfdfd, #ededed); display: grid; place-items: center; }
.btn:last-child { margin-right: 0; }
.btn svg { width: 14px; height: 14px; }
.btn .big { width: 18px; height: 18px; }
.btn .sm { width: 11px; height: 11px; }
.render { display: block; width: 771px; height: 783px; margin: 4px 0 0 4px; background: #52576e; }
.active .render { margin: 3px 0 0 3px; box-sizing: content-box; border: 1px solid #efefef; outline: 2px solid #0000fa; }

.status { height: 34px; flex: none; display: flex; align-items: center; }
.cancel { width: 20px; height: 16px; margin-left: 630px; border: 1px solid #bbb; border-radius: 2px; background: #f4f4f4; display: grid; place-items: center; }
.cancel svg { width: 8px; height: 8px; }
.message { width: 606px; height: 28px; margin: 2px 0 0 2px; border: 1px solid #fff; border-top-color: #999; border-left-color: #999; }
.memory { width: 628px; height: 28px; margin: 2px 0 0 6px; border: 1px solid #a5aba5; border-radius: 2px; background: #fff; display: flex; align-items: center; }
.memory i { width: 198px; height: 26px; background: linear-gradient(#dcfcd8, #b8dcb5); border-right: 1px solid #85a085; margin-right: 25px; }
.memory span { margin-top: -2px; }
.size { width: 12px; height: 12px; margin: 16px 0 0 9px; background: radial-gradient(circle at 1px 1px, #aaa .7px, transparent .8px) 0 0 / 3px 3px; clip-path: polygon(100% 0, 100% 100%, 0 100%); }
```
FILE: mesh.js
```js
// Wireframe so dense that cells are about a pixel wide: white edges
// with the background showing through in single-pixel gaps.
const canvas = document.getElementById('mesh');
const ctx = canvas.getContext('2d');
let seed = 12345;
function rnd() {
  seed = (seed * 1664525 + 1013904223) >>> 0;
  return seed / 4294967296;
}
const width = 771, bottom = 724, radius = 3162, corner = 100;
const image = ctx.createImageData(width, bottom);
const back = [82, 87, 110];
const gaps = new Float32Array(width * bottom);
for (let y = 0; y < bottom; y++) {
  const d = bottom - y;
  const left = corner - radius + Math.sqrt(radius * radius - d * d);
  for (let x = 0; x < width; x++) {
    const i = y * width + x;
    const pick = rnd();
    let gap = pick < .52 ? 0 : pick < .76 ? .15 + rnd() * .4 : .5 + rnd() * .45;
    if (x && y) {
      const copy = rnd();
      if (copy < .12) gap = gaps[i - 1];
      else if (copy < .24) gap = gaps[i - width];
    }
    gaps[i] = gap;
    const show = Math.max(0, Math.min(1, x + 1 - left));
    for (let k = 0; k < 3; k++) {
      image.data[i * 4 + k] = back[k] + (255 - back[k]) * (1 - gap) * show;
    }
    image.data[i * 4 + 3] = 255;
  }
}
ctx.putImageData(image, 0, 0);
// Orientation axes
ctx.fillStyle = '#b5b52a';
ctx.fillRect(12, 764, 1, 6);
ctx.fillRect(13, 764, 1, 1);
ctx.fillStyle = '#c22222';
ctx.fillRect(14, 770, 5, 1);
```
